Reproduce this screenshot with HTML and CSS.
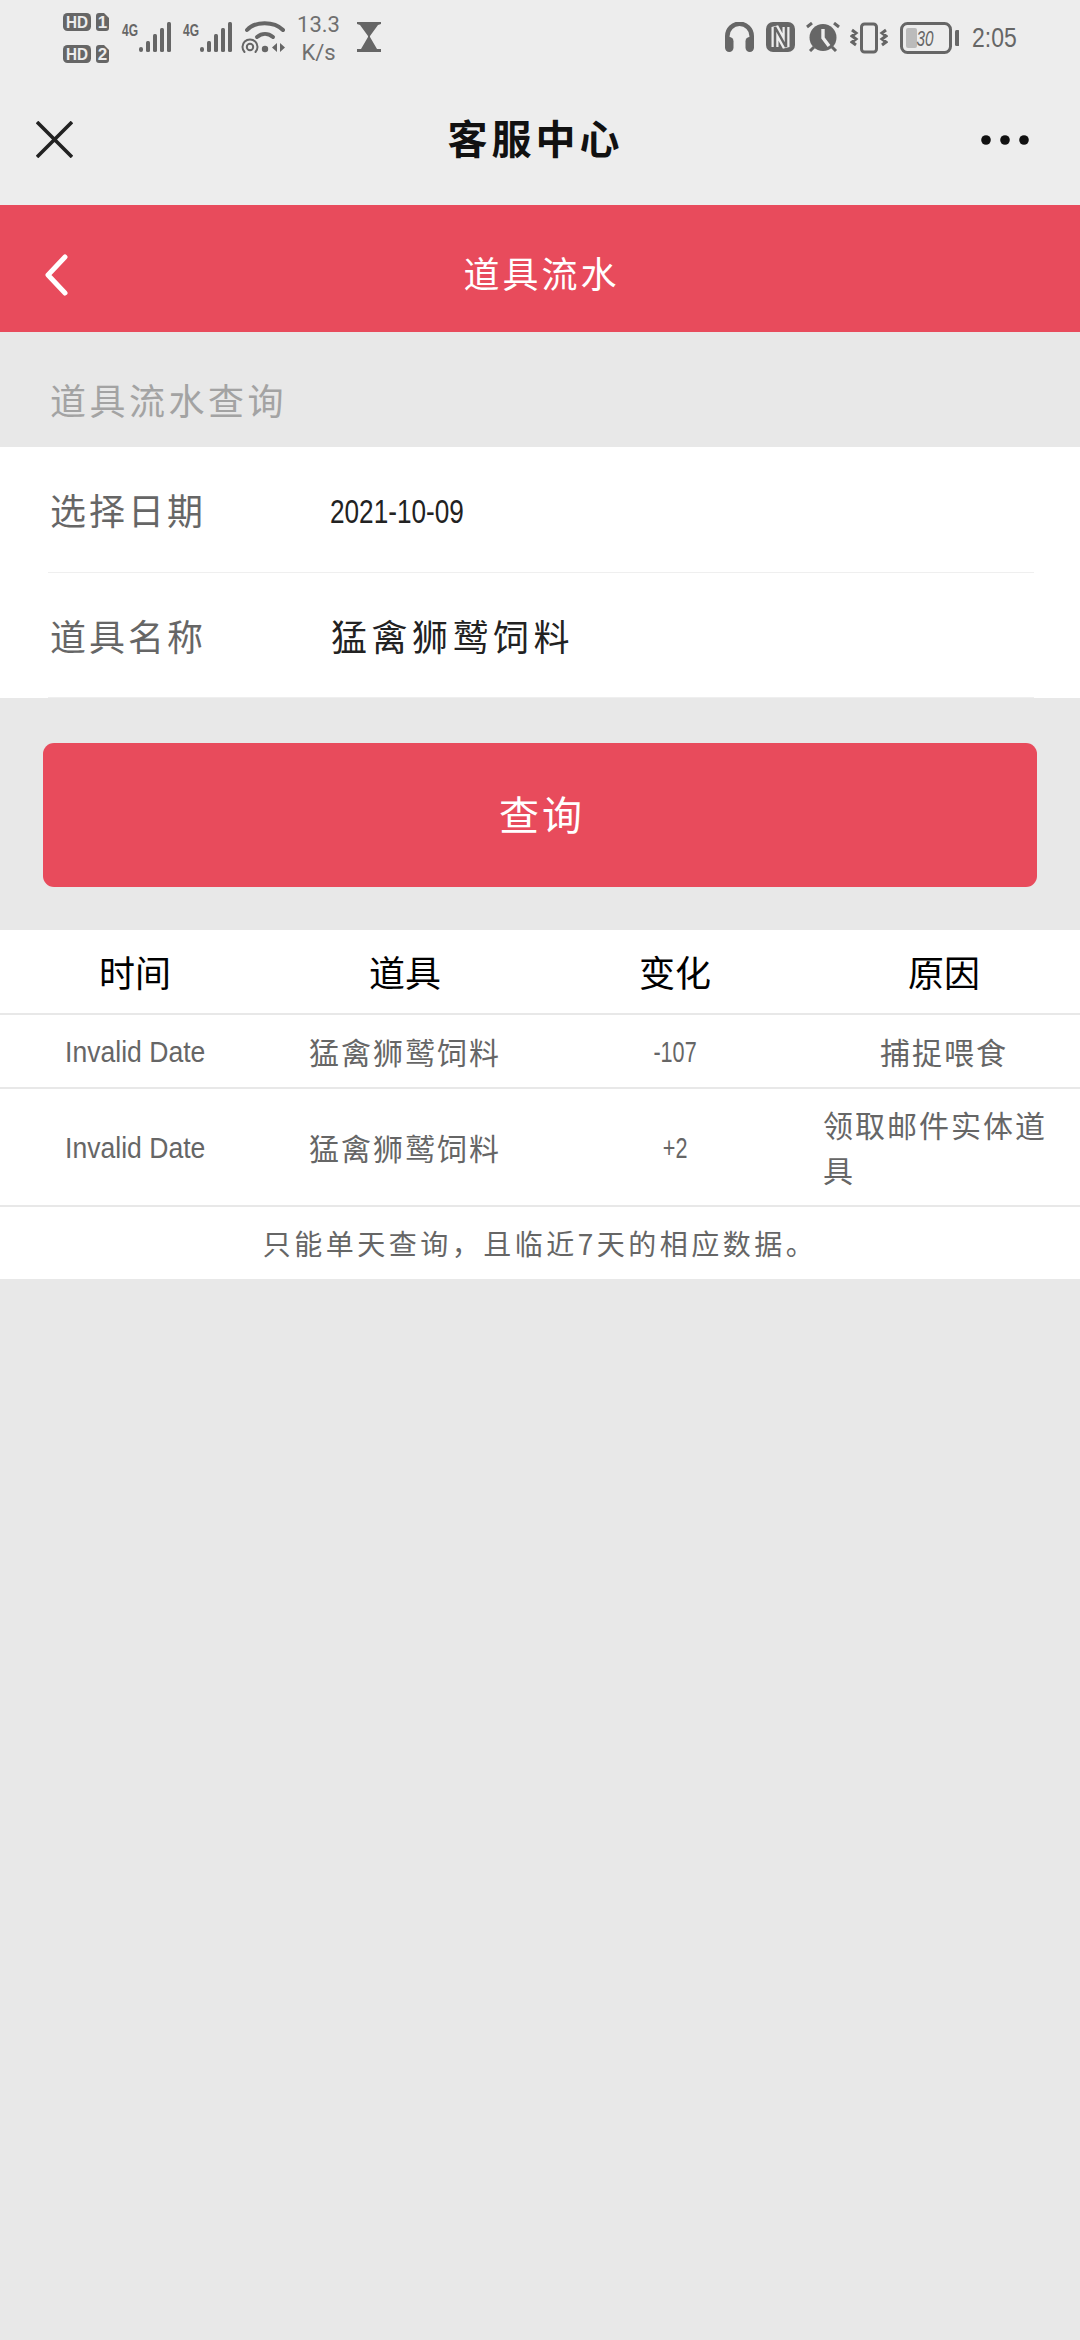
FILE: index.html
```html
<!DOCTYPE html>
<html lang="zh-CN">
<head>
<meta charset="utf-8">
<title>道具流水</title>
<link rel="stylesheet" href="styles.css">
</head>
<body>
<header class="chrome">
  <div class="status">
    <div class="status-left">
      <div class="hd-stack">
        <svg class="hd" viewBox="0 0 47 18"><rect x="0" y="0" width="28" height="18" rx="4.500" fill="#666"/><text x="14" y="15" class="hd-t" text-anchor="middle" textLength="22" lengthAdjust="spacingAndGlyphs">HD</text><path d="M33 3a3 3 0 0 1 3-3h5l5 5v10a3 3 0 0 1-3 3h-7a3 3 0 0 1-3-3z" fill="#666"/><text x="39.500" y="15" class="hd-t" text-anchor="middle">1</text></svg>
        <svg class="hd" viewBox="0 0 47 18"><rect x="0" y="0" width="28" height="18" rx="4.500" fill="#666"/><text x="14" y="15" class="hd-t" text-anchor="middle" textLength="22" lengthAdjust="spacingAndGlyphs">HD</text><path d="M33 3a3 3 0 0 1 3-3h5l5 5v10a3 3 0 0 1-3 3h-7a3 3 0 0 1-3-3z" fill="#666"/><text x="39.500" y="15" class="hd-t" text-anchor="middle">2</text></svg>
      </div>
      <svg class="sig" viewBox="0 0 50 32"><text x="1" y="15" class="g4" textLength="16" lengthAdjust="spacingAndGlyphs">4G</text><g fill="#666"><rect x="18" y="26" width="4" height="5" rx="2"/><rect x="25" y="20" width="4" height="11" rx="1.500"/><rect x="32" y="13" width="4" height="18" rx="1.500"/><rect x="39" y="7" width="4" height="24" rx="1.500"/><rect x="46" y="1" width="4" height="30" rx="1.500"/></g></svg>
      <svg class="sig" viewBox="0 0 50 32"><text x="1" y="15" class="g4" textLength="16" lengthAdjust="spacingAndGlyphs">4G</text><g fill="#666"><rect x="18" y="26" width="4" height="5" rx="2"/><rect x="25" y="20" width="4" height="11" rx="1.500"/><rect x="32" y="13" width="4" height="18" rx="1.500"/><rect x="39" y="7" width="4" height="24" rx="1.500"/><rect x="46" y="1" width="4" height="30" rx="1.500"/></g></svg>
      <svg class="wifi" viewBox="0 0 45 32"><g fill="none" stroke="#666" stroke-linecap="round"><path d="M6 9C14 0 33 0 42 9" stroke-width="4"/><path d="M16 16C21 12 27 12 32 16" stroke-width="4"/><path d="M3.500 31a7.500 7.500 0 1 1 11 0" stroke-width="2"/><circle cx="9" cy="26" r="3.200" stroke-width="2"/></g><circle cx="24" cy="28" r="3.200" fill="#666"/><path d="M36 22v9l-5-4.500zM39 22v9l5-4.500z" fill="#666"/></svg>
      <div class="speed"><span>13.3</span><span>K/s</span></div>
      <svg class="glass" viewBox="0 0 24 30"><path d="M0 0h24v2l-3 1-8 11v1l7 12h4v3H0v-3h4l7-12v-1L3 3 0 2z" fill="#666"/><path d="M6 27l6-3 6 3z" fill="#666"/></svg>
    </div>
    <div class="status-right">
      <svg class="ic29 head" viewBox="0 0 29 30"><path d="M2.300 20V14a12.200 12.200 0 0 1 24.400 0v6" fill="none" stroke="#666" stroke-width="4.600"/><rect x="0" y="15" width="8.500" height="15" rx="4.200" fill="#666"/><rect x="20.500" y="15" width="8.500" height="15" rx="4.200" fill="#666"/></svg>
      <svg class="ic29 nfc" viewBox="0 0 29 30"><rect x="0" y="0" width="29" height="30" rx="7" fill="#666"/><path d="M9 25V5l11 20V5" fill="none" stroke="#ededed" stroke-width="7" stroke-linejoin="miter"/><path d="M9 25V5l11 20V5" fill="none" stroke="#666" stroke-width="2.500" stroke-linejoin="miter"/></svg>
      <svg class="alarm" viewBox="0 0 34 30"><circle cx="17" cy="15.500" r="13.500" fill="#666"/><path d="M17 7v9l6 8" fill="none" stroke="#ededed" stroke-width="3.400"/><path d="M1 5l5-4M33 5l-5-4M8 25l-4 4M26 25l4 4" stroke="#666" stroke-width="3"/></svg>
      <svg class="vib" viewBox="0 0 38 32"><rect x="11.500" y="2" width="15" height="28" rx="3" fill="none" stroke="#666" stroke-width="3"/><path d="M2 8l4 3-4 3 4 3-4 3 4 3M36 8l-4 3 4 3-4 3 4 3-4 3" fill="none" stroke="#666" stroke-width="3"/></svg>
      <svg class="batt" viewBox="0 0 59 32"><rect x="1.500" y="1.500" width="49" height="29" rx="6" fill="none" stroke="#666" stroke-width="3"/><rect x="6" y="6" width="11" height="20" rx="2" fill="#bbb"/><text x="25" y="24" class="batt-t" text-anchor="middle" textLength="17" lengthAdjust="spacingAndGlyphs">30</text><rect x="55" y="8" width="4.500" height="16" rx="1.500" fill="#666"/></svg>
      <span class="clock"><span class="clock-t">2:05</span></span>
    </div>
  </div>
  <div class="nav">
    <svg class="close" viewBox="0 0 37 37"><path d="M1 1l35 35M36 1L1 36" stroke="#222" stroke-width="3.600" fill="none"/></svg>
    <h1 class="nav-title">客服中心</h1>
    <svg class="more" viewBox="0 0 48 10"><circle cx="5" cy="5" r="4.800" fill="#111"/><circle cx="24" cy="5" r="4.800" fill="#111"/><circle cx="43" cy="5" r="4.800" fill="#111"/></svg>
  </div>
</header>

<div class="banner">
  <svg class="back" viewBox="0 0 24 42"><path d="M21 3L4 21l17 18" fill="none" stroke="#fff" stroke-width="5" stroke-linecap="round" stroke-linejoin="round"/></svg>
  <h2 class="banner-title">道具流水</h2>
</div>

<p class="section-label">道具流水查询</p>

<section class="form">
  <div class="form-row"><span class="form-key">选择日期</span><span class="form-date">2021-10-09</span></div>
  <div class="form-row"><span class="form-key">道具名称</span><span class="form-val">猛禽狮鹫饲料</span></div>
</section>

<div class="action"><button class="query">查询</button></div>

<section class="table">
  <div class="tr th"><div>时间</div><div>道具</div><div>变化</div><div>原因</div></div>
  <div class="tr"><div><span class="latin">Invalid Date</span></div><div>猛禽狮鹫饲料</div><div><span class="num">-107</span></div><div>捕捉喂食</div></div>
  <div class="tr"><div><span class="latin">Invalid Date</span></div><div>猛禽狮鹫饲料</div><div><span class="num">+2</span></div><div>领取邮件实体道具</div></div>
  <p class="note">只能单天查询，且临近7天的相应数据。</p>
</section>
</body>
</html>
```
FILE: styles.css
```css
* { box-sizing: border-box; }
html, body { margin: 0; padding: 0; }
body {
  width: 1080px;
  min-height: 2340px;
  background: #e8e8e8;
  font-family: "Noto Sans CJK SC", "Noto Sans", sans-serif;
  color: #666;
}
h1, h2, p { margin: 0; font-weight: 400; }

.chrome { background: #ededed; height: 205px; }
.status { height: 79px; display: flex; align-items: flex-start; padding: 0 62px 0 63px; justify-content: space-between; }
.status-left, .status-right { display: flex; align-items: flex-start; }
.hd-stack { display: flex; flex-direction: column; gap: 14px; padding-top: 13px; margin-right: 11px; }
.hd { width: 47px; height: 18px; display: block; }
.hd-t { font: 700 17px "Liberation Sans", sans-serif; fill: #ededed; }
.sig { width: 50px; height: 32px; margin: 21px 11px 0 0; }
.g4 { font: 700 17px "Liberation Sans", sans-serif; fill: #666; }
.wifi { width: 45px; height: 32px; margin: 21px 11px 0 -2px; }
.speed { width: 43px; display: flex; flex-direction: column; align-items: center; padding-top: 11px; margin-right: 17px; font: 400 22px/28px Roboto, sans-serif; color: #707070; white-space: nowrap; }
.glass { width: 24px; height: 30px; margin-top: 22px; }

.status-right { gap: 11px; padding-top: 22px; }
.ic29 { width: 29px; height: 30px; }
.nfc { margin-left: 1px; }
.alarm { width: 34px; height: 30px; }
.vib { width: 38px; height: 32px; margin-left: -1px; }
.batt { width: 59px; height: 32px; margin-left: 1px; }
.batt-t { font: italic 400 22px "Liberation Sans", sans-serif; fill: #666; }
.clock { width: 46px; margin-left: 2px; padding-top: 1px; }
.clock-t { display: inline-block; font: 400 27px/30px "Liberation Sans", sans-serif; color: #666; transform: scaleX(0.85); transform-origin: left center; }

.nav { height: 126px; display: flex; align-items: center; justify-content: space-between; padding: 0 51px 5px 36px; }
.close { width: 37px; height: 37px; }
.more { width: 48px; height: 10px; }
.nav-title { font-size: 40px; line-height: 56px; font-weight: 700; color: #111; letter-spacing: 4px; margin: 0 0 5px 17px; }

.banner { height: 127px; background: #e84b5c; display: flex; align-items: center; justify-content: center; position: relative; }
.back { position: absolute; left: 44px; top: 49px; width: 24px; height: 42px; }
.banner-title { font-size: 36px; line-height: 50px; color: #fff; letter-spacing: 3px; margin-left: 3px; padding-top: 6px; height: 56px; }

.section-label { height: 115px; padding: 42px 0 0 50px; font-size: 36px; line-height: 50px; letter-spacing: 3.500px; color: #a3a3a3; }

.form { background: #fff; padding: 0 46px 0 48px; }
.form-row { height: 125.500px; display: flex; align-items: center; border-bottom: 1.500px solid #efefef; padding-left: 2px; }
.form-key { width: 280px; font-size: 36px; letter-spacing: 3px; color: #666; }
.form-val { font-size: 36px; letter-spacing: 4.500px; color: #222; margin-left: 1px; }
.form-date { display: inline-block; padding-top: 4px; font: 400 34px/46px "Liberation Sans", sans-serif; color: #222; transform: scaleX(0.77); transform-origin: left center; }

.action { padding: 45px 43px 43px; }
.query { display: block; width: 100%; height: 144px; padding: 0 0 4px 4px; border: 0; border-radius: 11px; background: #e84b5c; color: #fff; font: 400 40px/56px "Noto Sans CJK SC", sans-serif; letter-spacing: 3px; }

.table { background: #fff; }
.tr { display: grid; grid-template-columns: repeat(4, 270px); border-bottom: 2px solid #e8e8e8; font-size: 30px; line-height: 45px; color: #666; min-height: 74px; letter-spacing: 2px; }
.tr > div { display: flex; justify-content: center; align-items: center; padding: 13px 15px; }
.tr > div:last-child { padding-left: 13px; }
.th { height: 85px; color: #000; font-size: 36px; letter-spacing: 0; }
.latin { display: inline-block; font-family: "Liberation Sans", sans-serif; font-size: 30px; letter-spacing: 0; transform: scaleX(0.885); white-space: nowrap; }
.num { display: inline-block; font-family: "Liberation Sans", sans-serif; font-size: 30px; letter-spacing: 0; transform: scaleX(0.72); }
.note { height: 72px; display: flex; align-items: center; justify-content: center; font-size: 28px; letter-spacing: 3.500px; color: #666; }
```
